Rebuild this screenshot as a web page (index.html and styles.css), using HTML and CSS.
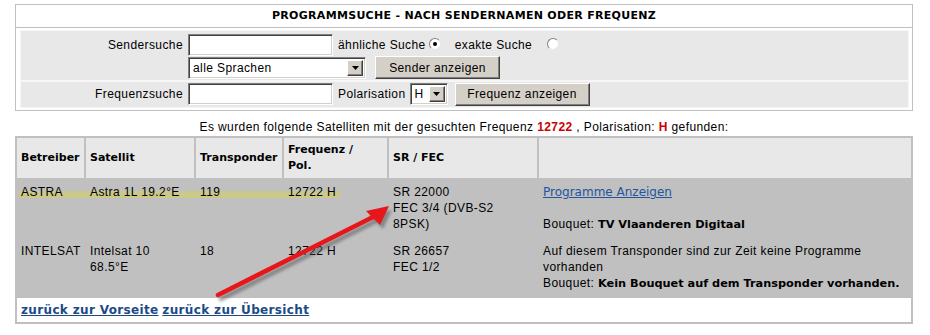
FILE: index.html
```html
<!DOCTYPE html>
<html lang="de">
<head>
    <meta charset="UTF-8">
    <title>Programmsuche</title>
    <link rel="stylesheet" href="styles.css">
</head>
<body>
    <div class="page">
        <div class="search">
            <div class="search-title">PROGRAMMSUCHE - NACH SENDERNAMEN ODER FREQUENZ</div>
            <div class="search-form">
                <div class="form-row">
                    <div class="label">Sendersuche</div>
                    <div class="controls">
                        <div class="line">
                            <span class="input"></span>
                            <span class="txt">ähnliche Suche</span>
                            <span class="radio checked"></span>
                            <span class="txt gap">exakte Suche</span>
                            <span class="radio"></span>
                        </div>
                        <div class="line">
                            <span class="select wide"><span class="val">alle Sprachen</span><span class="drop"><svg width="7" height="4" viewBox="0 0 7 4"><path d="M0 0h7L3.5 4z" fill="#000"/></svg></span></span>
                            <span class="button btn-sender">Sender anzeigen</span>
                        </div>
                    </div>
                </div>
                <div class="form-row last">
                    <div class="label">Frequenzsuche</div>
                    <div class="controls">
                        <div class="line">
                            <span class="input"></span>
                            <span class="txt">Polarisation</span>
                            <span class="select small"><span class="val">H</span><span class="drop"><svg width="7" height="4" viewBox="0 0 7 4"><path d="M0 0h7L3.5 4z" fill="#000"/></svg></span></span>
                            <span class="button btn-freq">Frequenz anzeigen</span>
                        </div>
                    </div>
                </div>
            </div>
        </div>

        <p class="result-info">Es wurden folgende Satelliten mit der gesuchten Frequenz <b class="red">12722</b> , Polarisation: <b class="red">H</b> gefunden:</p>

        <div class="highlight"></div>

        <table class="results">
            <colgroup>
                <col style="width:67px">
                <col style="width:108px">
                <col style="width:86px">
                <col style="width:103px">
                <col style="width:148px">
                <col>
            </colgroup>
            <tr>
                <th>Betreiber</th>
                <th>Satellit</th>
                <th>Transponder</th>
                <th>Frequenz /<br>Pol.</th>
                <th>SR / FEC</th>
                <th></th>
            </tr>
            <tr>
                <td><span class="over">ASTRA</span></td>
                <td><span class="over">Astra 1L 19.2°E</span></td>
                <td><span class="over">119</span></td>
                <td><span class="over">12722 H</span></td>
                <td>SR 22000<br>FEC 3/4 (DVB-S2<br>8PSK)</td>
                <td><a href="#" class="prog-link">Programme Anzeigen</a><br><br>Bouquet: <b class="bq">TV Vlaanderen Digitaal</b></td>
            </tr>
            <tr>
                <td>INTELSAT</td>
                <td>Intelsat 10<br>68.5°E</td>
                <td>18</td>
                <td>12722 H</td>
                <td>SR 26657<br>FEC 1/2</td>
                <td class="nowrap">Auf diesem Transponder sind zur Zeit keine Programme<br>vorhanden<br>Bouquet: <b class="bq">Kein Bouquet auf dem Transponder vorhanden.</b></td>
            </tr>
            <tr>
                <td colspan="6" class="nav"><a href="#">zurück zur Vorseite</a> <a href="#">zurück zur Übersicht</a></td>
            </tr>
        </table>

        <!-- Markierung aus dem Screenshot -->
        <svg class="arrow" width="930" height="335" viewBox="0 0 930 335">
            <defs>
                <filter id="blur"><feGaussianBlur stdDeviation="1.4"/></filter>
            </defs>
            <g transform="translate(3,4)" filter="url(#blur)" opacity="0.55">
                <line x1="218" y1="295" x2="375" y2="216" stroke="#555" stroke-width="4.5" stroke-linecap="round"/>
                <polygon points="389,206 366,211 380,225" fill="#555"/>
            </g>
            <line x1="218" y1="295" x2="375" y2="216" stroke="#e8161a" stroke-width="4.5" stroke-linecap="round"/>
            <polygon points="389,206 366,211 380,225" fill="#e8161a"/>
        </svg>
    </div>
</body>
</html>
```

FILE: styles.css
```css
body {
    margin: 0;
    background: #fff;
    color: #000;
    font-family: "Liberation Sans", Arial, sans-serif;
    font-size: 12px;
    letter-spacing: 0.4px;
}
.page {
    position: relative;
    width: 898px;
    padding: 4px 0 0 15px;
}
.search {
    border: 1px solid #c0c0c0;
    background: #fff;
}
.search-title {
    height: 22px;
    line-height: 22px;
    border-bottom: 1px solid #c0c0c0;
    text-align: center;
    font-family: "DejaVu Sans", Verdana, sans-serif;
    font-weight: bold;
    font-size: 11px;
    letter-spacing: 0.3px;
}
.search-form {
    margin: 2px 3px 2px 4px;
    background: #e8e8e8;
    border: 1px solid #f6f6f6;
}
.form-row {
    display: flex;
    padding: 3px 0 1px;
    border-bottom: 2px solid #f6f6f6;
}
.form-row.last {
    border-bottom: 0;
    padding: 1px 0 2px;
}
.label {
    width: 162px;
    padding-right: 5px;
    text-align: right;
    line-height: 22px;
}
.controls {
    display: flex;
    flex-direction: column;
}
.line {
    display: flex;
    align-items: center;
    height: 22px;
}
.line + .line {
    height: 23px;
}
.input {
    display: inline-block;
    box-sizing: border-box;
    width: 145px;
    height: 22px;
    background: #fff;
    border: 1px solid;
    border-color: #808080 #fff #fff #808080;
    box-shadow: inset 1px 1px 0 #404040, inset -1px -1px 0 #d4d0c8;
}
.txt {
    margin-left: 5px;
}
.txt.gap {
    margin-left: 14px;
}
.radio {
    display: inline-block;
    box-sizing: border-box;
    width: 12px;
    height: 12px;
    margin-left: 3px;
    margin-top: -3px;
    border-radius: 50%;
    background: #fff;
    border: 1px solid;
    border-color: #808080 #e8e8e8 #e8e8e8 #808080;
    position: relative;
}
.radio.checked::after {
    content: "";
    position: absolute;
    left: 3px;
    top: 3px;
    width: 4px;
    height: 4px;
    border-radius: 50%;
    background: #000;
}
.txt.gap + .radio {
    margin-left: 15px;
}
.select {
    display: inline-flex;
    box-sizing: border-box;
    height: 22px;
    background: #fff;
    border: 1px solid;
    border-color: #808080 #fff #fff #808080;
    box-shadow: inset 1px 1px 0 #404040, inset -1px -1px 0 #d4d0c8;
    padding: 2px;
}
.select.wide {
    width: 178px;
}
.select.small {
    width: 38px;
    margin-left: 4px;
}
.select .val {
    flex: 1;
    line-height: 16px;
    padding-left: 2px;
}
.drop {
    box-sizing: border-box;
    width: 16px;
    height: 16px;
    display: flex;
    align-items: center;
    justify-content: center;
    background: #d4d0c8;
    border: 1px solid;
    border-color: #fff #404040 #404040 #fff;
    box-shadow: inset -1px -1px 0 #808080;
}
.button {
    display: inline-flex;
    align-items: center;
    justify-content: center;
    box-sizing: border-box;
    height: 23px;
    background: #d4d0c8;
    border: 1px solid;
    border-color: #fff #404040 #404040 #fff;
    box-shadow: inset -1px -1px 0 #808080;
}
.btn-sender {
    width: 125px;
    margin-left: 9px;
}
.btn-freq {
    width: 135px;
    margin-left: 7px;
}
.result-info {
    margin: 8px 0 1px;
    line-height: 16px;
    text-align: center;
}
.red {
    color: #cc0000;
}
.highlight {
    position: absolute;
    left: 19px;
    top: 191px;
    width: 321px;
    height: 7px;
    background: #cbc98a;
}
.over {
    position: relative;
}
.results {
    width: 898px;
    table-layout: fixed;
    border-spacing: 2px;
    background: #c0c0c0;
}
.results th,
.results td {
    padding: 4px;
    line-height: 16px;
    text-align: left;
    vertical-align: top;
}
.results th {
    background: #e8e8e8;
    vertical-align: middle;
    height: 32px;
    font-family: "DejaVu Sans", Verdana, sans-serif;
    font-size: 11px;
    letter-spacing: 0;
}
.results td.nowrap {
    white-space: nowrap;
}
.prog-link {
    color: #23549e;
    font-family: "DejaVu Sans", Verdana, sans-serif;
    letter-spacing: 0;
}
.bq {
    font-family: "DejaVu Sans", Verdana, sans-serif;
    font-size: 11.3px;
    letter-spacing: 0;
}
.results td.nav {
    background: #fff;
}
.nav a {
    color: #1b4a87;
    font-family: "DejaVu Sans", Verdana, sans-serif;
    font-weight: bold;
    letter-spacing: 0.35px;
}
.arrow {
    position: absolute;
    left: 0;
    top: 0;
    pointer-events: none;
}
```
